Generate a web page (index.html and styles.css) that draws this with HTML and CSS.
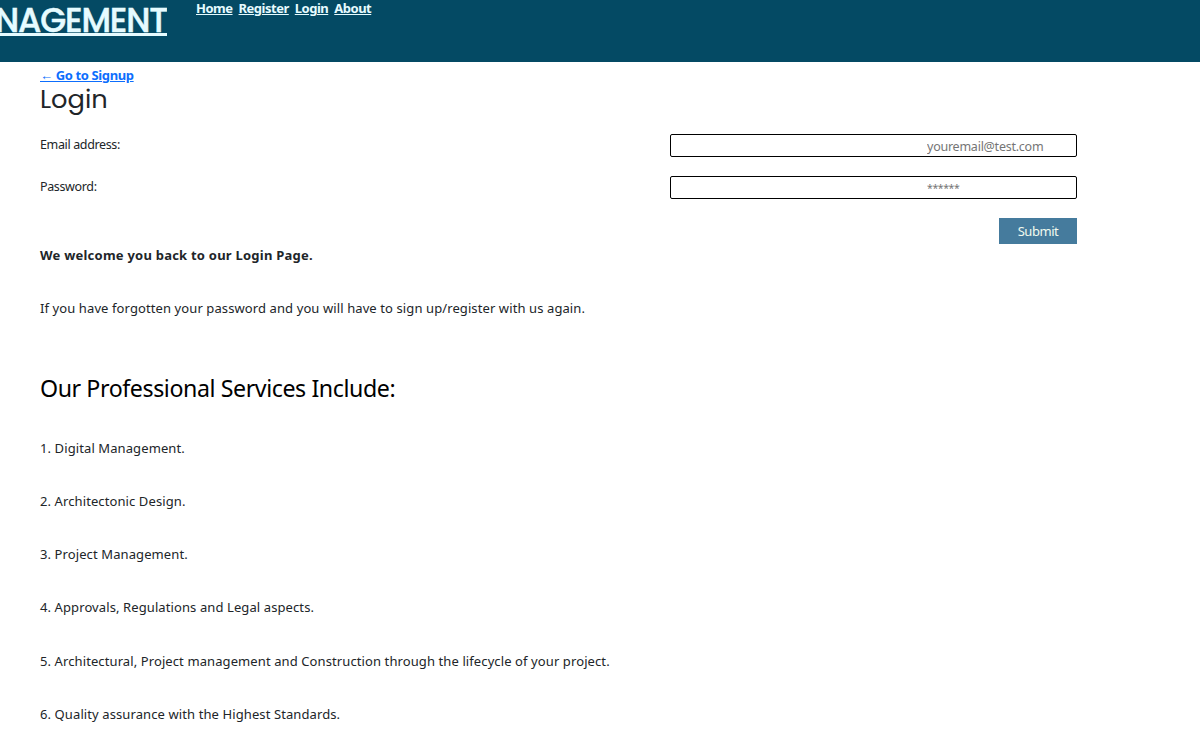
FILE: index.html
```html
<!DOCTYPE html>
<html lang="en">
<head>
<meta charset="utf-8">
<title>Login</title>
<link rel="stylesheet" href="styles.css">
</head>
<body>
<header class="topbar">
  <div class="brand-box"><a class="brand" href="#">NAGEMENT</a></div>
  <nav class="nav"><a href="#">Home</a><a href="#">Register</a><a href="#">Login</a><a href="#">About</a></nav>
</header>
<main class="page">
  <a class="signup" href="#">← Go to Signup</a>
  <h1 class="title">Login</h1>
  <form class="form">
    <div class="field"><label for="email">Email address:</label><input id="email" type="email" placeholder="youremail@test.com"></div>
    <div class="field"><label for="password">Password:</label><input id="password" class="password" type="password" placeholder="******"></div>
    <button class="submit" type="button">Submit</button>
  </form>
  <p class="welcome">We welcome you back to our Login Page.</p>
  <p class="note">If you have forgotten your password and you will have to sign up/register with us again.</p>
  <h2 class="services-title">Our Professional Services Include:</h2>
  <div class="services">
    <p>1. Digital Management.</p>
    <p>2. Architectonic Design.</p>
    <p>3. Project Management.</p>
    <p>4. Approvals, Regulations and Legal aspects.</p>
    <p>5. Architectural, Project management and Construction through the lifecycle of your project.</p>
    <p>6. Quality assurance with the Highest Standards.</p>
  </div>
</main>
</body>
</html>
```
FILE: styles.css
```css
* { box-sizing: border-box; }
body { margin: 0; height: 755px; overflow: hidden; background: #fff; color: #212529; font: 13px/20px "Segoe UI", "Noto Sans", sans-serif; }
p, h1, h2 { margin: 0; white-space: nowrap; }
.topbar { display: flex; height: 62px; background: #044a64; }
.brand-box { display: flex; justify-content: flex-end; width: 167px; overflow: hidden; }
.brand { color: #e6fbff; font: 500 33.5px/41px Poppins, Inter, sans-serif; letter-spacing: -1.15px; -webkit-text-stroke: 0.5px #e6fbff; text-decoration-thickness: 3px; text-underline-offset: 1px; text-decoration-skip-ink: none; }
.nav { display: flex; gap: 6px; margin-left: 29px; line-height: 17px; }
.nav a { color: #e6fbff; font-weight: 700; font-size: 13px; letter-spacing: -0.49px; }
.page { padding: 4px 40px 0; }
.signup { display: block; width: max-content; color: #0d6efd; font-weight: 700; line-height: 19px; letter-spacing: -0.37px; }
.title { font: 400 25.7px/29px Poppins, Inter, sans-serif; }
.form { display: flex; flex-direction: column; width: 1037px; padding-top: 20px; }
.field { display: flex; justify-content: space-between; height: 42px; }
.field label { font-size: 12.5px; line-height: 21px; letter-spacing: -0.36px; }
.field input { width: 407px; height: 23px; padding: 2px 0 0 256px; border: 1px solid #000; border-radius: 2px; background: #fff; font: 12.5px/18px "Segoe UI", "Noto Sans", sans-serif; letter-spacing: -0.24px; }
.field input::placeholder { color: #757575; opacity: 1; }
.field .password { padding-top: 1px; font-size: 10.5px; letter-spacing: -0.4px; }
.submit { align-self: flex-end; width: 78px; height: 26px; padding: 0; border: 0; background: #457b9d; color: #f1faee; font: 13px/26px "Segoe UI", "Noto Sans", sans-serif; letter-spacing: -0.45px; }
.welcome { font-weight: 700; line-height: 22px; letter-spacing: 0.23px; }
.note { padding-top: 32px; letter-spacing: 0.1px; }
.services-title { padding-top: 52px; color: #000; font-weight: 400; font-size: 23.2px; line-height: 36px; letter-spacing: -0.42px; }
.services { padding-top: 31.8px; }
.services p { height: 53.2px; letter-spacing: 0.1px; }
```
